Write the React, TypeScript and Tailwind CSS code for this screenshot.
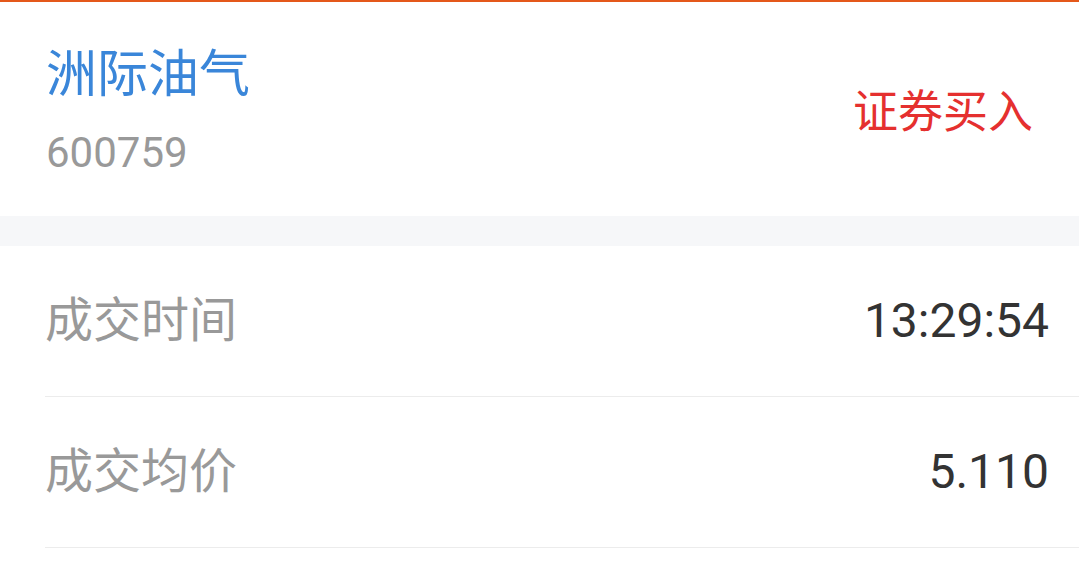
const font = { fontFamily: 'Roboto, "Noto Sans CJK SC", sans-serif' };

function Row({ label, value }: { label: string; value: string }) {
  return (
    <div className="pl-[45px]">
      <div className="flex h-[151px] items-center justify-between border-b border-[#ececec] pr-[30px]">
        <span className="text-[48px] leading-none text-[#999999]">{label}</span>
        <span className="text-[48px] leading-none text-[#333333]">{value}</span>
      </div>
    </div>
  );
}

export default function App() {
  return (
    <div className="h-[570px] w-[1079px] overflow-hidden bg-white" style={font}>
      <div className="h-[2px] bg-[#e4581a]" />
      <div className="flex h-[214px] items-start justify-between pl-[46px] pr-[46px] pt-[47px]">
        <div className="flex flex-col">
          <span className="text-[51px] leading-none text-[#3a86d9]">洲际油气</span>
          <span className="mt-[32px] text-[42px] leading-none text-[#999999]">600759</span>
        </div>
        <span className="mt-[41px] text-[45px] leading-none text-[#e5302f]">证券买入</span>
      </div>
      <div className="h-[30px] bg-[#f6f7f9]" />
      <Row label="成交时间" value="13:29:54" />
      <Row label="成交均价" value="5.110" />
    </div>
  );
}
